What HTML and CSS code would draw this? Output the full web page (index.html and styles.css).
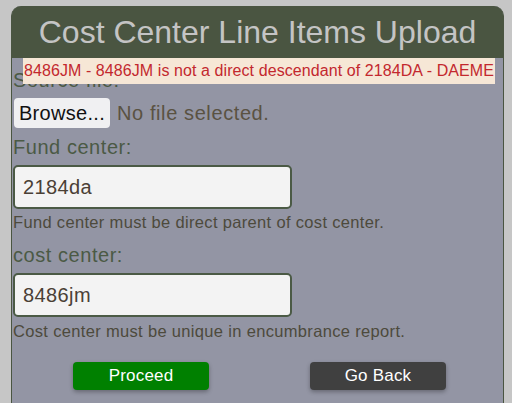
FILE: index.html
```html
<!DOCTYPE html>
<html>
<head>
<meta charset="utf-8">
<link rel="stylesheet" href="styles.css">
</head>
<body>
<div class="panel">
  <div class="header"><h1 class="title">Cost Center Line Items Upload</h1></div>
  <div class="content">
    <div class="error">8486JM - 8486JM is not a direct descendant of 2184DA - DAEME</div>
    <div class="label label-source">Source file:</div>
    <div class="file-row">
      <span class="browse">Browse...</span>
      <span class="nofile">No file selected.</span>
    </div>
    <div class="label label-fund">Fund center:</div>
    <div class="input">2184da</div>
    <div class="help">Fund center must be direct parent of cost center.</div>
    <div class="label label-cost">cost center:</div>
    <div class="input">8486jm</div>
    <div class="help help-cost">Cost center must be unique in encumbrance report.</div>
    <div class="actions">
      <span class="btn btn-proceed">Proceed</span>
      <span class="btn btn-back">Go Back</span>
    </div>
  </div>
</div>
</body>
</html>
```
FILE: styles.css
```css
html, body {
  margin: 0;
  height: 100%;
  overflow: hidden;
}
body {
  background: #c6c6c6;
  padding: 6px 8px 0 11px;
  box-sizing: border-box;
  font-family: "Liberation Sans", Arial, sans-serif;
}
.panel {
  width: 493px;
  height: 397px;
  box-sizing: border-box;
  border-radius: 10px 10px 0 0;
  background: #9395a4;
  border-left: 1px solid #4a5541;
  border-right: 1px solid #4a5541;
}
.header {
  background: #4a5541;
  height: 52px;
  border-radius: 9px 9px 0 0;
  display: flex;
  align-items: center;
  justify-content: center;
}
.title {
  margin: 0;
  font-weight: normal;
  font-size: 32px;
  color: #c4c4c4;
  padding-top: 1px;
}
.content {
  position: relative;
  display: flow-root;
  padding: 0 0 0 1px;
}
.error {
  position: absolute;
  left: 11px;
  top: 0;
  width: 472px;
  height: 26px;
  box-sizing: border-box;
  background: #f6e7d6;
  color: #c3282e;
  font-size: 16px;
  letter-spacing: 0.08px;
  line-height: 26px;
  padding-left: 1px;
  white-space: nowrap;
  overflow: hidden;
}
.label {
  font-size: 20px;
  line-height: 23px;
  letter-spacing: 0.55px;
  color: #4b5a45;
}
.label-source { margin-top: 11px; }
.label-fund { margin-top: 8px; }
.label-cost { margin-top: 12px; }
.file-row {
  display: flex;
  align-items: center;
  margin-top: 6px;
}
.browse {
  width: 96px;
  box-sizing: border-box;
  text-align: center;
  background: #f0f0f2;
  border-radius: 4px;
  height: 30px;
  line-height: 30px;
  font-size: 20px;
  letter-spacing: 0.3px;
  color: #111;
  margin-left: 1px;
}
.nofile {
  font-size: 20px;
  letter-spacing: 0.6px;
  color: #5a5242;
  margin-left: 7px;
}
.input {
  margin-top: 6px;
  width: 279px;
  height: 44px;
  box-sizing: border-box;
  border: 2px solid #4b5a45;
  border-radius: 5px;
  background: #f3f3f3;
  font-size: 20px;
  letter-spacing: 0.4px;
  line-height: 40px;
  padding-left: 8px;
  color: #4a4035;
}
.help {
  font-size: 16.5px;
  line-height: 19px;
  letter-spacing: 0.33px;
  color: #4d4a3c;
  margin-top: 4px;
}
.help-cost { margin-top: 5px; }
.actions {
  display: flex;
  gap: 101px;
  padding-left: 60px;
  margin-top: 21px;
}
.btn {
  width: 136px;
  height: 28px;
  border-radius: 4px;
  color: #fff;
  font-size: 17px;
  line-height: 28px;
  letter-spacing: 0.2px;
  text-align: center;
  box-shadow: 0 2px 4px rgba(0,0,0,0.3);
}
.btn-proceed { background: #008000; }
.btn-back { background: #404040; }
```
